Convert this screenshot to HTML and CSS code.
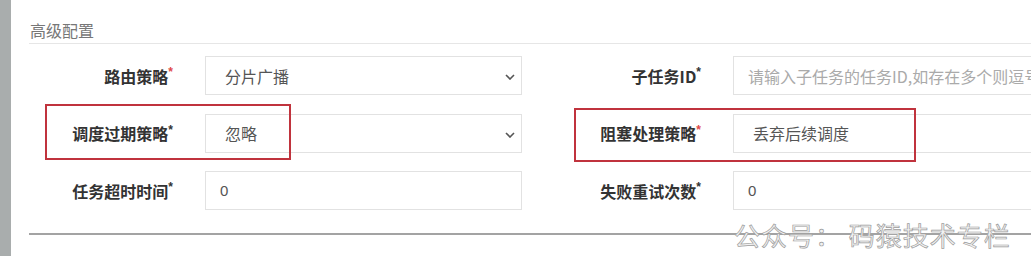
FILE: index.html
```html
<!DOCTYPE html>
<html lang="zh">
<head>
<meta charset="utf-8">
<link rel="stylesheet" href="styles.css">
</head>
<body>
<div class="page">
  <div class="strip"></div>
  <div class="main">
    <div class="section-title">高级配置</div>
    <div class="form">
      <div class="label">路由策略<span class="star red">*</span></div>
      <div class="field select"><span class="value">分片广播</span>
        <svg class="chev" width="10" height="6" viewBox="0 0 10 6"><path d="M1 1 L5 5 L9 1" fill="none" stroke="#555" stroke-width="1.6"/></svg>
      </div>
      <div class="label">子任务ID<span class="star">*</span></div>
      <div class="field input"><span class="placeholder">请输入子任务的任务ID,如存在多个则逗号分隔</span></div>

      <div class="label">调度过期策略<span class="star">*</span></div>
      <div class="field select"><span class="value">忽略</span>
        <svg class="chev" width="10" height="6" viewBox="0 0 10 6"><path d="M1 1 L5 5 L9 1" fill="none" stroke="#555" stroke-width="1.6"/></svg>
      </div>
      <div class="label">阻塞处理策略<span class="star red">*</span></div>
      <div class="field select"><span class="value">丢弃后续调度</span></div>

      <div class="label">任务超时时间<span class="star">*</span></div>
      <div class="field input"><span class="num">0</span></div>
      <div class="label">失败重试次数<span class="star">*</span></div>
      <div class="field input"><span class="num">0</span></div>

      <div class="mark mark-left"></div>
      <div class="mark mark-right"></div>
    </div>
    <div class="rule"></div>
  </div>
  <div class="watermark">公众号：&nbsp;码猿技术专栏</div>
</div>
</body>
</html>
```

FILE: styles.css
```css
html, body {
  margin: 0;
  padding: 0;
  background: #ffffff;
  overflow: hidden;
}
body {
  width: 1031px;
  height: 256px;
  font-family: "Noto Sans CJK SC", "Liberation Sans", sans-serif;
}
.page {
  position: relative;
  display: flex;
  height: 256px;
}
.strip {
  width: 11px;
  flex: none;
  background: #a9adad;
}
.main {
  flex: 1;
  padding-left: 18px;
  padding-top: 19px;
  min-width: 0;
}
.section-title {
  font-size: 16px;
  line-height: 22px;
  color: #777;
  padding-left: 1px;
  padding-bottom: 2px;
  border-bottom: 1px solid #e6e6e6;
}
.form {
  position: relative;
  margin-top: 12px;
  display: grid;
  grid-template-columns: 176px 317px 211px 317px;
  grid-auto-rows: 39px;
  row-gap: 18.5px;
}
.label {
  display: flex;
  align-items: center;
  justify-content: flex-end;
  padding-right: 32px;
  font-size: 16px;
  font-weight: bold;
  color: #333;
  white-space: nowrap;
}
.star {
  font-family: "Liberation Sans", sans-serif;
  font-size: 12px;
  align-self: flex-start;
  margin-top: 9px;
  color: #333;
}
.star.red { color: #e04848; }
.field {
  position: relative;
  display: flex;
  align-items: center;
  border: 1px solid #e2e2e2;
  background: #fff;
  font-size: 16px;
  white-space: nowrap;
  overflow: hidden;
  box-sizing: border-box;
}
.select { padding-left: 19px; color: #555; }
.input { padding-left: 14px; }
.value { color: #555; }
.placeholder { color: #aaa; }
.num { font-family: "Liberation Sans", sans-serif; color: #555; font-size: 15px; }
.chev {
  position: absolute;
  right: 6px;
  top: 17px;
}
.mark {
  position: absolute;
  border: 2px solid #c0333d;
  box-sizing: border-box;
  pointer-events: none;
}
.mark-left {
  left: 16px;
  top: 48px;
  width: 246px;
  height: 56px;
}
.mark-right {
  left: 545px;
  top: 52px;
  width: 342px;
  height: 54px;
}
.rule {
  margin-top: 23px;
  height: 2px;
  background: #a3a3a3;
}
.watermark {
  position: absolute;
  left: 734px;
  top: 219px;
  font-size: 26px;
  line-height: 32px;
  color: #f2f2f2;
  -webkit-text-stroke: 0.7px #9c9c9c;
  letter-spacing: 1px;
  white-space: nowrap;
}
```
